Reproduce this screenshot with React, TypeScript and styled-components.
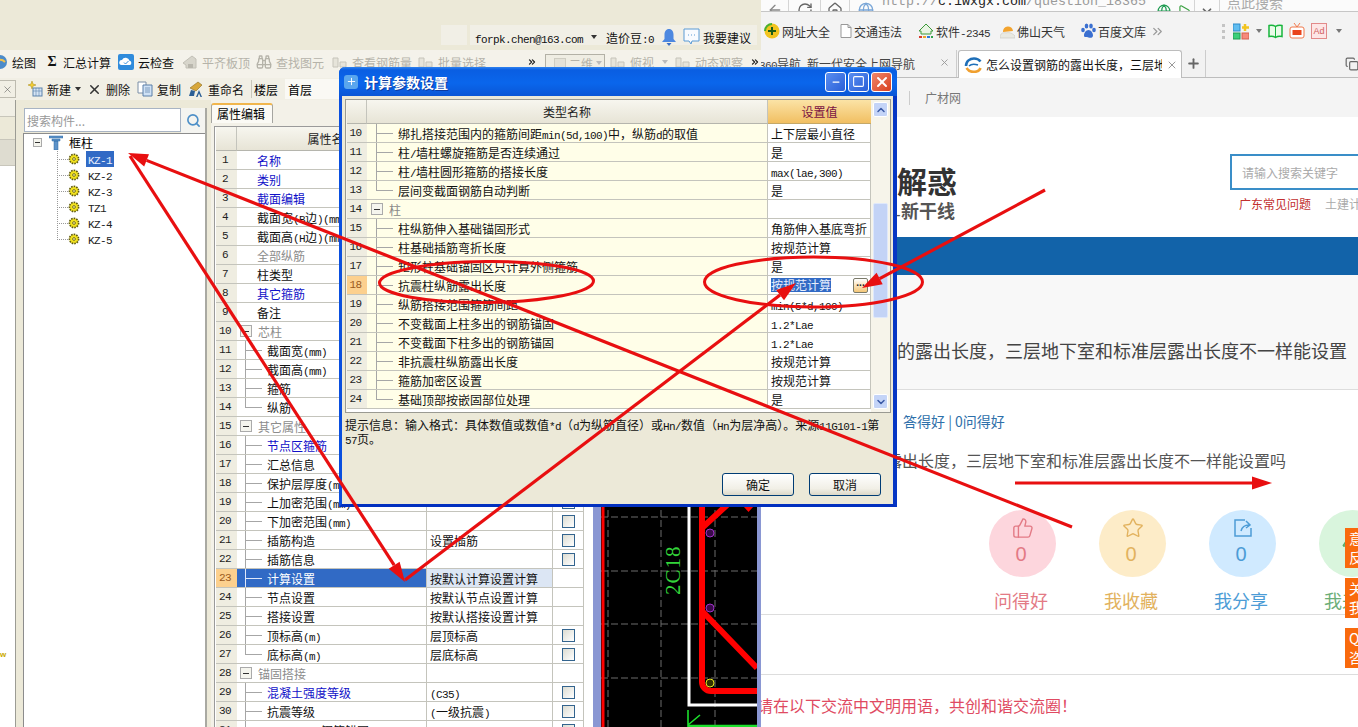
import React from "react";
import styled, { createGlobalStyle } from "styled-components";
import { ThumbsUp, Star, ChevronsRight, Binoculars, Search, X, RotateCw, House, Globe, Bell, MessageSquareMore, Plus, ArrowLeft, ChevronDown, ChevronUp, Play, Minus, Square, Copy } from "lucide-react";

const Global = createGlobalStyle`
  html, body { margin: 0; padding: 0; background: #ece9d8; }
  body { font-family: "Noto Sans CJK SC", "Liberation Sans", sans-serif; font-size: 12px; color: #000; }
  * { box-sizing: border-box; }
`;

const Desktop = styled.div`
  position: relative; width: 1358px; height: 727px; overflow: hidden; display: flex; background: #ece9d8;
`;

const Lat = styled.span`
  font-family: "Liberation Mono", monospace; font-size: 11px; letter-spacing: -0.6px; white-space: pre;
`;
const T = ({ s }: { s: string }) => (
  <>
    {s.split(/([\x20-\x7e]+)/).map((p, i) => (/^[\x20-\x7e]+$/.test(p) ? <Lat key={i}>{p}</Lat> : p))}
  </>
);

/* ---------- left application window ---------- */
const AppWindow = styled.div`
  width: 761px; height: 727px; flex: none; display: flex; flex-direction: column; overflow: hidden; background: #ece9d8;
`;
const TopStrip = styled.div`
  height: 50px; flex: none; padding: 25px 0 5px 441px; display: flex; gap: 3px;
`;
const FaintBlock = styled.div`
  width: 26px; background: #f1efe6;
`;
const Account = styled.div`
  width: 287px; background: #f1efe6; display: flex; align-items: center; padding-top: 4px; white-space: nowrap; color: #111;
`;
const AccountMail = styled.span`
  margin-left: 5px; width: 108px;
`;
const Caret = styled.span<{ $ml?: number; $c?: string }>`
  display: inline-block; width: 0; height: 0; margin-left: ${(p) => p.$ml ?? 0}px;
  border-left: 3px solid transparent; border-right: 3px solid transparent; border-top: 4px solid ${(p) => p.$c ?? "#333"};
  flex: none;
`;
const Beans = styled.span`
  margin-left: 9px; width: 51px;
`;
const Suggest = styled.span`
  margin-left: 3px;
`;
const IconGap = styled.span<{ $ml: number }>`
  margin-left: ${(p) => p.$ml}px; display: inline-flex; flex: none;
`;

const Tool1 = styled.div`
  height: 28px; flex: none; margin-left: -8px; display: flex; align-items: flex-start; padding-top: 4px; background: #f4f2ea; white-space: nowrap;
`;
const ToolItem = styled.div<{ $w: number; $off?: boolean }>`
  width: ${(p) => p.$w}px; flex: none; height: 16px; display: flex; align-items: center; gap: 4px;
  color: ${(p) => (p.$off ? "#b5b3a9" : "#111")};
`;
const ToolSigma = styled.span`
  width: 14px; text-align: center; font: bold 14px "Liberation Serif", serif; color: #111;
`;
const ViewSelect = styled.div`
  width: 60px; height: 18px; flex: none; margin-right: 5px; border: 1px solid #b3b1a6; background: #efede3; display: flex; align-items: center; gap: 3px; padding-left: 8px; color: #b5b3a9;
`;
const ViewSwatch = styled.span`
  width: 12px; height: 10px; background: #e4e2d8; border: 1px solid #cfcdc2;
`;

const Tool2 = styled.div`
  height: 22px; flex: none; display: flex; align-items: center; background: #f1efe5; white-space: nowrap;
`;
const CloseCell = styled.div`
  width: 16px; height: 18px; margin-right: 11px; flex: none; border: 1px solid #bdbbb0; border-left: 0; display: flex; align-items: center; justify-content: center; color: #555;
`;
const ToolSep = styled.span`
  width: 1px; height: 18px; background: #c9c7bb; margin-right: 2px;
`;
const FloorLabel = styled.span`
  width: 31px;
`;
const FloorBox = styled.div`
  width: 60px; height: 20px; padding-left: 3px; background: #faf9f4; display: flex; align-items: center;
`;

const Body = styled.div`
  flex: 1; display: flex; min-height: 0;
`;
const Nav = styled.div`
  width: 16px; flex: none; margin-right: 7px; border-right: 1px solid #9c9c94; display: flex; flex-direction: column;
`;
const NavRow = styled.div<{ $h: number; $bg: string }>`
  height: ${(p) => p.$h}px; flex: none; background: ${(p) => p.$bg}; border-bottom: 1px solid #c8c6bb;
`;
const NavRest = styled.div`
  flex: 1; background: #fff; padding-top: 484px; font: bold 8px "Liberation Sans", sans-serif; color: #c8a900;
`;
const TreePanel = styled.div`
  width: 184px; flex: none; margin-top: 8px; border-right: 2px solid #a9a9a2; display: flex; flex-direction: column; background: #fff;
`;
const SearchRow = styled.div`
  height: 25px; flex: none; display: flex; padding-left: 1px; background: #ece9d8;
`;
const SearchInput = styled.div`
  width: 157px; height: 24px; border: 1px solid #a8b4c4; background: #fff; color: #999; display: flex; align-items: center; padding-left: 2px; font-size: 12px;
`;
const SearchBtn = styled.div`
  flex: 1; display: flex; align-items: center; justify-content: center; background: #f4f4f0; color: #4d8fc7;
`;
const TreeBox = styled.div`
  flex: 1; border-left: 1px solid #8c8c8c; border-top: 1px solid #8c8c8c; padding-left: 9px;
`;
const TreeRoot = styled.div`
  height: 17px; display: flex; align-items: center;
`;
const MinusBox = styled.span<{ $size?: number }>`
  width: ${(p) => p.$size ?? 9}px; height: ${(p) => p.$size ?? 9}px; flex: none; border: 1px solid #aaa; background: #f5f5ee; display: flex; align-items: center; justify-content: center;
  &::after { content: ""; width: 60%; height: 1px; background: #333; }
`;
const FunnelSlot = styled.span`
  margin: 0 6px 0 7px; display: inline-flex;
`;
const TreeItem = styled.div`
  height: 16px; display: flex; align-items: center; padding-left: 24px;
`;
const TreeDots = styled.span<{ $last?: boolean }>`
  width: 11px; height: 16px; flex: none;
  background-image: repeating-linear-gradient(to right, #999 0 1px, transparent 1px 2px), repeating-linear-gradient(to bottom, #999 0 1px, transparent 1px 2px);
  background-size: 100% 1px, 1px ${(p) => (p.$last ? "8px" : "100%")};
  background-position: 0 8px, 0 0;
  background-repeat: no-repeat;
`;
const GearSlot = styled.span`
  display: inline-flex; margin-right: 6px;
`;
const TreeName = styled.span<{ $sel?: boolean }>`
  height: 16px; padding: 0 2px; line-height: 16px; background: ${(p) => (p.$sel ? "#316ac5" : "transparent")}; color: ${(p) => (p.$sel ? "#e8eefc" : "#222")};
`;

const Props = styled.div`
  width: 382px; flex: none; margin-left: 4px; padding-top: 3px; background: #f3f1e8; display: flex; flex-direction: column; overflow: hidden;
`;
const PropTab = styled.div`
  width: 62px; height: 20px; flex: none; background: #fbfaf5; border: 1px solid #a5a5a0; border-top: 2px solid #f1b64d; border-bottom: 0; border-radius: 3px 3px 0 0; padding-left: 5px; line-height: 17px;
`;
const PropTable = styled.div`
  margin: 3px 0 0 3px; width: 379px; flex: 1; border-top: 1px solid #9a9a9a; border-left: 1px solid #9a9a9a; padding-left: 1px; background: #fff;
`;
const PropRow = styled.div<{ $head?: boolean }>`
  display: grid; grid-template-columns: 21px 190px 126px 31px; height: ${(p) => (p.$head ? 24 : 19)}px;
`;
const Num = styled.div<{ $on?: boolean }>`
  display: flex; align-items: center; justify-content: center; padding-right: 3px; background: ${(p) => (p.$on ? "#fcd08e" : "#efede1")}; color: ${(p) => (p.$on ? "#9a5a20" : "#222")}; border-bottom: 1px solid #c4c4bc;
`;
const HeadCell = styled.div`
  display: flex; align-items: center; justify-content: center; background: linear-gradient(#f7f6ef, #e7e4d6); border-right: 1px solid #c4c4bc; border-bottom: 1px solid #b5b5ad; color: #222;
`;
const NameCell = styled.div<{ $sel?: boolean; $color?: string; $pad: number }>`
  display: flex; align-items: center; padding-left: ${(p) => p.$pad}px; white-space: nowrap; overflow: hidden;
  background: ${(p) => (p.$sel ? "#316ac5" : "#fff")}; color: ${(p) => (p.$sel ? "#fff" : p.$color ?? "#111")};
  border-right: 1px solid #c4c4bc; border-bottom: 1px solid #c4c4bc;
`;
const Branch = styled.span<{ $last?: boolean; $sel?: boolean }>`
  width: 17px; height: 18px; flex: none; margin-right: 5px;
  background-image: linear-gradient(${(p) => (p.$sel ? "#dfe8fa" : "#a6a6a6")}, ${(p) => (p.$sel ? "#dfe8fa" : "#a6a6a6")}), linear-gradient(${(p) => (p.$sel ? "#dfe8fa" : "#a6a6a6")}, ${(p) => (p.$sel ? "#dfe8fa" : "#a6a6a6")});
  background-size: 1px ${(p) => (p.$last ? "10px" : "100%")}, 100% 1px;
  background-position: 0 0, 0 9px;
  background-repeat: no-repeat;
`;
const GroupBox = styled(MinusBox)`
  margin-right: 6px;
`;
const ValueCell = styled.div<{ $sel?: boolean }>`
  display: flex; align-items: center; padding-left: 3px; white-space: nowrap; background: ${(p) => (p.$sel ? "#dce6f4" : "#fff")}; color: #111; border-right: 1px solid #c4c4bc; border-bottom: 1px solid #c4c4bc;
`;
const CheckCell = styled.div`
  display: flex; align-items: center; justify-content: center; border-right: 1px solid #c4c4bc; border-bottom: 1px solid #c4c4bc; background: #fff;
`;
const Check = styled.span`
  width: 13px; height: 13px; border: 1px solid #33648e; background: linear-gradient(135deg, #dcdcd2, #fff);
`;
const Band = styled.div<{ $w: number }>`
  width: ${(p) => p.$w}px; flex: none; background: #8a97d3;
`;
const Canvas = styled.div`
  width: 156px; flex: none; background: #000; overflow: hidden; display: flex;
`;

/* ---------- browser window ---------- */
const Browser = styled.div`
  width: 597px; height: 727px; flex: none; background: #fff; overflow: hidden; display: flex; flex-direction: column; position: relative;
`;
const AddressBar = styled.div`
  height: 12px; flex: none; display: flex; align-items: flex-start; background: #fbfbfb; border-bottom: 1px solid #c6c6c6; overflow: hidden; color: #777;
`;
const AddrSlot = styled.div<{ $w: number; $bl?: boolean }>`
  width: ${(p) => p.$w}px; height: 11px; flex: none; display: flex; justify-content: center; align-items: flex-end; overflow: hidden; border-left: ${(p) => (p.$bl ? "1px solid #d5d5d5" : "0")};
  & > * { flex: none; margin-bottom: -7px; }
`;
const Url = styled.div`
  width: 272px; flex: none; font: 13.33px/13px "Liberation Mono", monospace; color: #9a9a9a; white-space: nowrap; margin-top: -5px; height: 16px;
`;
const UrlHost = styled.b`
  font-weight: 400; color: #222;
`;
const AddrSearch = styled.div`
  margin: -7px 0 0 7px; font-size: 14px; color: #aaa; white-space: nowrap; line-height: 18px;
`;
const Bookmarks = styled.div`
  height: 38px; flex: none; display: flex; align-items: center; padding-left: 3px; background: #f3f3f3; white-space: nowrap; color: #333;
`;
const Mark = styled.div<{ $w: number }>`
  width: ${(p) => p.$w}px; flex: none; display: flex; align-items: center; gap: 2px;
`;
const TabsBar = styled.div`
  height: 28px; flex: none; display: flex; background: #f2f2f2; border-bottom: 1px solid #bdbdbd; white-space: nowrap; color: #333; overflow: visible;
`;
const TabOff = styled.div`
  width: 198px; margin-left: -2px; flex: none; padding-top: 7px; display: flex; align-items: flex-start; border-right: 1px solid #ccc; line-height: 14px;
`;
const TabOffTitle = styled.span`
  width: 180px; color: #444;
`;
const TabOn = styled.div`
  width: 224px; height: 28px; flex: none; background: #fff; border: 1px solid #bdbdbd; border-bottom: 0; border-radius: 3px 3px 0 0; display: flex; align-items: center; padding-left: 5px; gap: 4px; margin-left: 1px;
`;
const TabTitle = styled.span`
  width: 176px; overflow: hidden; color: #111;
`;
const TabPlus = styled.div`
  width: 24px; flex: none; border-right: 1px solid #ccc; display: flex; align-items: center; justify-content: center; color: #666;
`;
const TabEnd = styled.div`
  margin-left: 139px; display: flex; align-items: center; color: #666;
`;
const SiteNav = styled.div`
  height: 39px; flex: none; background: #f4f4f4; padding-left: 148px; display: flex; align-items: center; gap: 15px; color: #777;
`;
const SiteSep = styled.span`
  width: 1px; height: 14px; background: #ccc;
`;
const Hero = styled.div`
  height: 120px; flex: none; display: flex; background: #fff;
`;
const Logo = styled.div`
  width: 196px; flex: none; padding-top: 45px; text-align: right; overflow: hidden; white-space: nowrap;
`;
const LogoMain = styled.div`
  font-size: 30px; line-height: 36px; font-weight: 700; color: #333;
`;
const LogoSub = styled.div`
  font-size: 18px; line-height: 20px; margin: 2px 2px 0 0; font-weight: 700; color: #555;
`;
const HeroSearch = styled.div`
  margin-left: 273px; padding-top: 37px; flex: none; width: 200px;
`;
const HeroInput = styled.div`
  height: 36px; border: 2px solid #3a8ec8; padding-left: 10px; display: flex; align-items: center; color: #aaa;
`;
const HeroLinks = styled.div`
  margin: 6px 0 0 9px; line-height: 16px; display: flex; gap: 14px; white-space: nowrap; color: #aaa;
`;
const HotLink = styled.span`
  color: #c22f2f;
`;
const BlueBar = styled.div`
  height: 38px; flex: none; background: #1263a9;
`;
const TitleStrip = styled.div`
  height: 115px; flex: none; padding: 64px 0 0 28px; background: #f8f8f8; border-bottom: 1px solid #ddd; font-size: 18px; line-height: 22px; color: #444; white-space: nowrap;
`;
const Stats = styled.div`
  margin: 21px 0 0 142px; height: 20px; font-size: 14px; line-height: 20px; color: #2e70aa; white-space: pre;
`;
const Question = styled.div`
  margin: 17px 0 0 13px; height: 24px; font-size: 16px; line-height: 24px; color: #555; white-space: nowrap;
`;
const Actions = styled.div`
  margin-top: 38px; padding: 0 0 2px 228px; display: flex; gap: 43px; border-bottom: 1px solid #ddd;
`;
const Action = styled.div<{ $c: string }>`
  width: 67px; flex: none; display: flex; flex-direction: column; align-items: center; color: ${(p) => p.$c};
`;
const Circle = styled.div<{ $bg: string }>`
  width: 67px; height: 67px; border-radius: 50%; background: ${(p) => p.$bg}; display: flex; flex-direction: column; align-items: center; gap: 4px; padding-top: 7px;
`;
const Zero = styled.span`
  font: 20px/22px "Liberation Sans", sans-serif; margin-right: 3px;
`;
const ActionName = styled.div`
  margin: 11px 3px 0 0; height: 24px; font-size: 18px; line-height: 24px; white-space: nowrap;
`;
const Spacer = styled.div`
  height: 60px; flex: none; border-bottom: 1px solid #ddd;
`;
const Notice = styled.div`
  margin: 20px 0 0 -4px; font-size: 16px; line-height: 20px; color: #e04a62; white-space: nowrap;
`;
const SideTags = styled.div`
  position: absolute; left: 584px; top: 528px; display: flex; flex-direction: column; gap: 10px;
`;
const SideTag = styled.div`
  width: 40px; height: 40px; background: #f96a0d; color: #fff; font-size: 14px; line-height: 19px; padding: 1px 0 0 4px; white-space: nowrap;
`;

/* ---------- dialog ---------- */
const Dialog = styled.div`
  position: absolute; left: 339px; top: 67px; width: 558px; height: 440px; background: #ece9d8;
  border-left: 3px solid #0a4fdf; border-right: 4px solid #0636c4; border-bottom: 3px solid #0230bf; border-radius: 6px 6px 0 0; display: flex; flex-direction: column;
`;
const TitleBar = styled.div`
  height: 29px; flex: none; margin: 0 -4px 0 -3px; padding: 0 5px; display: flex; align-items: center; gap: 6px; border-radius: 6px 6px 0 0;
  background: linear-gradient(#2f82ee 0, #0a5ee2 10%, #0a66ec 55%, #0a56d6 100%);
`;
const TitleIcon = styled.span`
  width: 14px; height: 14px; border-radius: 3px; background: #59a6ee; display: flex; align-items: center; justify-content: center; color: #fff;
`;
const TitleText = styled.span`
  font-size: 14px; font-weight: 700; color: #fff; text-shadow: 1px 1px 0 #0a3aa0; flex: 1;
`;
const WinBtn = styled.span<{ $close?: boolean }>`
  width: 21px; height: 20px; border: 1px solid #fff; border-radius: 3px; display: flex; align-items: center; justify-content: center; color: #fff;
  background: ${(p) => (p.$close ? "linear-gradient(135deg,#f0866a,#d8401f)" : "linear-gradient(135deg,#5a8ef0,#2a5fd8)")};
  & + & { margin-left: -4px; }
`;
const ParamTable = styled.div`
  margin: 3px 0 0 3px; width: 546px; height: 314px; flex: none; border: 1px solid #9a9a92; padding: 0 2px 0 1px; display: flex; gap: 2px; background: #f6f4ea;
`;
const ParamGrid = styled.div`
  width: 524px; flex: none; background: #fff;
`;
const ParamRow = styled.div<{ $head?: boolean }>`
  display: grid; grid-template-columns: 20px 401px 103px; height: ${(p) => (p.$head ? 24 : 19)}px;
`;
const ParamHeadOn = styled.div`
  display: flex; align-items: center; justify-content: center; background: linear-gradient(#fbe3a6, #f1bf62); color: #7a1242; border-bottom: 1px solid #c4a868;
`;
const ParamName = styled.div<{ $pad: number; $muted?: boolean }>`
  display: flex; align-items: center; padding-left: ${(p) => p.$pad}px; background: #fffee8; color: ${(p) => (p.$muted ? "#888" : "#111")}; white-space: nowrap; border-right: 1px solid #c4c4bc; border-bottom: 1px solid #c4c4bc;
`;
const ParamValue = styled.div`
  display: flex; align-items: center; justify-content: space-between; padding: 0 2px 0 3px; white-space: nowrap; background: #fff; color: #111; border-right: 1px solid #c4c4bc; border-bottom: 1px solid #c4c4bc;
`;
const Selected = styled.span`
  background: #316ac5; color: #e8eefc; height: 14px; line-height: 14px;
`;
const MoreBtn = styled.span`
  width: 15px; height: 15px; border: 1px solid #7a7a6a; border-radius: 2px; background: linear-gradient(#fff, #f4c778); font: bold 10px/8px "Liberation Sans", sans-serif; text-align: center; color: #222;
`;
const Scroll = styled.div`
  width: 15px; flex: none; display: flex; flex-direction: column; padding: 2px 0 3px;
`;
const ScrollBtn = styled.span`
  width: 15px; height: 15px; flex: none; border-radius: 2px; border: 1px solid #fff; background: #c4d4f7; display: flex; align-items: center; justify-content: center; color: #3a59a5;
`;
const Thumb = styled.span`
  height: 115px; flex: none; margin: 86px 0 auto; border-radius: 2px; background: #c3d3f6; border: 1px solid #dfe8fb;
`;
const Hint = styled.div`
  margin: 6px 0 0 3px; font-size: 12px; line-height: 12px; white-space: nowrap; color: #111;
`;
const DialogButtons = styled.div`
  margin-top: auto; padding: 0 12px 8px 0; display: flex; justify-content: flex-end; gap: 15px;
`;
const XpButton = styled.div`
  width: 72px; height: 23px; border: 1px solid #003c74; border-radius: 3px; background: linear-gradient(#fff, #f1efe6 70%, #dcd8c8); display: flex; align-items: center; justify-content: center; color: #111;
`;

const Overlay = styled.svg`
  position: absolute; left: 0; top: 0; pointer-events: none;
`;

/* ---------- drawn icons ---------- */
const Gear = () => (
  <svg width="12" height="12" viewBox="0 0 12 12">
    <circle cx="6" cy="6" r="4.6" fill="#f2e21e" stroke="#5f5a10" strokeWidth="1.6" strokeDasharray="1.6 1" />
    <circle cx="6" cy="6" r="1.4" fill="#f8f3a0" stroke="#5f5a10" strokeWidth=".8" />
  </svg>
);
const Funnel = () => (
  <svg width="14" height="15" viewBox="0 0 14 15">
    <path d="M0 1h14v2h-14zM3 4h8v2H3zM5 6h4v9H5z" fill="#5d93c9" stroke="#2a68a4" strokeWidth=".5" />
  </svg>
);
const CloudIcon = () => (
  <svg width="16" height="16" viewBox="0 0 16 16">
    <rect width="16" height="16" rx="2" fill="#2f8bdc" />
    <path d="M3.5 11a2.5 2.5 0 0 1 .5-5 4 4 0 0 1 7.500 .8A2.200 2.200 0 0 1 12 11z" fill="#fff" />
    <path d="M6 8.500l1.500 1.500 3-3" stroke="#2f8bdc" fill="none" />
  </svg>
);
const HouseGrey = () => (
  <svg width="16" height="16" viewBox="0 0 16 16">
    <path d="M1 9l9-7 4 3v9H4V11z" fill="#d7d5cb" stroke="#c2c0b6" />
    <path d="M6 10h5v4H6z" fill="#b9b7ad" />
  </svg>
);
const LadderIcon = () => (
  <svg width="16" height="16" viewBox="0 0 16 16">
    <path d="M1 4h5v9H1zM8 8h6v5H8z" fill="#e6e4da" stroke="#c6c4ba" />
  </svg>
);
const BlueBall = () => (
  <svg width="16" height="16" viewBox="0 0 16 16">
    <circle cx="8" cy="8" r="7" fill="#4c8bc9" />
    <path d="M3 9c3-4 7-4 10-1" stroke="#f4c24a" strokeWidth="2" fill="none" />
  </svg>
);
const TabLogo = () => (
  <svg width="18" height="16" viewBox="0 0 18 16" fill="none" strokeWidth="2.600">
    <path d="M2 9C2 4 6 1.500 10 1.500c3 0 5 1 6.500 3" stroke="#1f6fb8" />
    <path d="M5 9c2-2 6-2 9-1" stroke="#1f6fb8" strokeWidth="1.600" />
    <path d="M2.500 11c2 3 6 4.500 10 3.500 2-.5 3.500-2 4-3.500" stroke="#f0a030" />
  </svg>
);
const NewIcon = () => (
  <svg width="16" height="16" viewBox="0 0 16 16">
    <path d="M5 0l1 3 3 1-3 1-1 3-1-3-3-1 3-1z" fill="#f3cd33" stroke="#a88a10" strokeWidth=".5" />
    <rect x="6" y="7" width="9" height="8" fill="#d6e4f4" stroke="#5c83ac" />
    <path d="M6 10h9M9 7v8M12 7v8" stroke="#5c83ac" strokeWidth=".6" />
  </svg>
);
const CopyIcon = () => (
  <svg width="16" height="16" viewBox="0 0 16 16">
    <path d="M1 1h8v11H1z" fill="#fff" stroke="#7a8ea6" />
    <path d="M6 4h9v11H6z" fill="#cfe1f5" stroke="#5a7fa8" />
    <path d="M8 7h5M8 9h5M8 11h5" stroke="#5a7fa8" strokeWidth=".7" />
  </svg>
);
const RenameIcon = () => (
  <svg width="16" height="17" viewBox="0 0 16 17">
    <path d="M2 7l8-6 4 3-6 6z" fill="#d8a73a" stroke="#8a6a20" strokeWidth=".6" />
    <path d="M1 15l2-6 4 1-1 5zM8 16l3-7 3 7h-1.500l-1.500-3.500L9.500 16z" fill="#2c5f96" />
  </svg>
);
const BellIcon = () => (
  <svg width="14" height="17" viewBox="0 0 14 17">
    <path d="M7 0c3 0 4.500 2.500 4.500 5.500V10L14 13H0l2.500-3V5.500C2.500 2.500 4 0 7 0z" fill="#4d88e0" />
    <path d="M4.500 14h5L7 17z" fill="#3a6fc4" />
  </svg>
);
const ChatIcon = () => (
  <svg width="17" height="18" viewBox="0 0 17 18">
    <path d="M1 1h15v12h-7l-1 3-2-3H1z" fill="#f8fbff" stroke="#5b9bd5" />
    <path d="M5 7h1M8 7h1M11 7h1" stroke="#5b9bd5" />
  </svg>
);
const PlusBall = () => (
  <svg width="16" height="16" viewBox="0 0 16 16">
    <circle cx="8" cy="8" r="7.500" fill="#f2c41f" />
    <path d="M1 8a7 7 0 0 1 7-7" stroke="#4cb02e" strokeWidth="2" fill="none" />
    <path d="M8 4v8M4 8h8" stroke="#1c5c18" strokeWidth="2" />
  </svg>
);
const PageIcon = () => (
  <svg width="12" height="14" viewBox="0 0 12 14">
    <path d="M1 .5h7l3 3v10H1z" fill="#fff" stroke="#999" />
    <path d="M8 .5v3h3" fill="none" stroke="#999" />
  </svg>
);
const SoftIcon = () => (
  <svg width="16" height="16" viewBox="0 0 16 16">
    <path d="M8 1L1 8h2v3h10V8h2z" fill="#e9f4e4" stroke="#3d9a3a" />
    <path d="M1 13h3v2H1z" fill="#d83a2c" />
    <path d="M5 13h3v2H5z" fill="#e9a42a" />
    <path d="M9 13h3v2H9z" fill="#2c7ad8" />
    <path d="M13 13h2v2h-2z" fill="#2ca24a" />
  </svg>
);
const WeatherIcon = () => (
  <svg width="15" height="16" viewBox="0 0 15 16">
    <path d="M3 9a5 5 0 0 1 10-1z" fill="#f3a32d" />
    <path d="M0 15v-2c1-3 4-4 6-3 3-1 6 0 9 3v2z" fill="#e9e9e2" stroke="#c8c8c0" strokeWidth=".6" />
  </svg>
);
const PawIcon = () => (
  <svg width="15" height="16" viewBox="0 0 15 16" fill="#3a6fd0">
    <ellipse cx="2" cy="7" rx="1.800" ry="2.300" />
    <ellipse cx="5.500" cy="3" rx="1.800" ry="2.500" />
    <ellipse cx="10" cy="3" rx="1.800" ry="2.500" />
    <ellipse cx="13" cy="7" rx="1.800" ry="2.300" />
    <path d="M7.500 7c2.500 0 4.500 3 4.500 5.500S9.500 15 7.500 14.500 3 15 3 12.500 5 7 7.500 7z" />
  </svg>
);
const GridIcon = () => (
  <svg width="16" height="17" viewBox="0 0 16 17">
    <rect x="0" y="1" width="7" height="7" fill="#61bdf0" stroke="#2f8bc9" />
    <rect x="0" y="10" width="7" height="6" fill="#3ccf7a" stroke="#1f9c52" />
    <rect x="9" y="10" width="7" height="6" fill="#f78a7a" stroke="#d4604f" />
    <path d="M12 1v7M9 4.500h7" stroke="#f2c41f" strokeWidth="2.500" />
  </svg>
);
const BookIcon = () => (
  <svg width="15" height="15" viewBox="0 0 15 15">
    <path d="M1 1.500c2.500-.5 5 0 6.500 1 1.500-1 4-1.500 6.500-1v11c-2.500-.5-5 0-6.500 1-1.500-1-4-1.500-6.500-1z" fill="#eafbe9" stroke="#17b53c" strokeWidth="1.500" />
    <path d="M7.500 2.500v11" stroke="#17b53c" />
  </svg>
);
const TvIcon = () => (
  <svg width="16" height="16" viewBox="0 0 16 16">
    <rect x="1" y="4" width="14" height="11" rx="2" fill="#fff" stroke="#f0784c" />
    <path d="M5 0l3 4 3-4" stroke="#f0784c" fill="none" />
    <rect x="3.500" y="7" width="9" height="5" fill="#e9441c" />
  </svg>
);
const ShareIcon = () => (
  <svg width="22" height="22" viewBox="0 0 22 22" fill="none" stroke="#4c9cd6" strokeWidth="1.500">
    <path d="M13 3H3v16h16V11" />
    <path d="M9 14c1-4 4-6 8-6M14 4l4 4-4 3" />
  </svg>
);
const EditIcon = () => (
  <svg width="22" height="34" viewBox="0 0 22 34" fill="none" stroke="#58a868" strokeWidth="1.500">
    <path d="M1 29l6-9M1 29h6" />
  </svg>
);
const AdBox = styled.span`
  width: 16px; height: 16px; border: 1px solid #e28a8a; background: #fde6e6; color: #d06060; font: 9px/14px "Liberation Sans", sans-serif; text-align: center; flex: none;
`;
const DotsBar = styled.span`
  width: 3px; height: 15px; flex: none; margin: 0 8px 0 57px; background: repeating-linear-gradient(#c4c4c4 0 3px, transparent 3px 6px);
`;
const Slot = styled.span<{ $ml: number }>`
  margin-left: ${(p) => p.$ml}px; display: inline-flex; flex: none;
`;

/* ---------- data ---------- */
type P = { label: string; c?: string; kind?: "g" | "b" | "l"; value?: string; check?: boolean; sel?: boolean };
const BLUE = "#1010c8";
const GREY = "#8c8c8c";
const propRows: P[] = [
  { label: "名称", c: BLUE }, { label: "类别", c: BLUE }, { label: "截面编辑", c: BLUE },
  { label: "截面宽(B边)(mm)" }, { label: "截面高(H边)(mm)" }, { label: "全部纵筋", c: GREY },
  { label: "柱类型" }, { label: "其它箍筋", c: BLUE }, { label: "备注" },
  { label: "芯柱", c: GREY, kind: "g" },
  { label: "截面宽(mm)", kind: "b" }, { label: "截面高(mm)", kind: "b" }, { label: "箍筋", kind: "b" }, { label: "纵筋", kind: "l" },
  { label: "其它属性", c: GREY, kind: "g" },
  { label: "节点区箍筋", c: BLUE, kind: "b" }, { label: "汇总信息", kind: "b" },
  { label: "保护层厚度(mm)", kind: "b" }, { label: "上加密范围(mm)", kind: "b", check: true }, { label: "下加密范围(mm)", kind: "b", check: true },
  { label: "插筋构造", kind: "b", value: "设置插筋", check: true }, { label: "插筋信息", kind: "b", check: true },
  { label: "计算设置", kind: "b", value: "按默认计算设置计算", sel: true },
  { label: "节点设置", kind: "b", value: "按默认节点设置计算" }, { label: "搭接设置", kind: "b", value: "按默认搭接设置计算" },
  { label: "顶标高(m)", kind: "b", value: "层顶标高", check: true }, { label: "底标高(m)", kind: "l", value: "层底标高", check: true },
  { label: "锚固搭接", c: GREY, kind: "g" },
  { label: "混凝土强度等级", c: BLUE, kind: "b", value: "(C35)", check: true },
  { label: "抗震等级", kind: "b", value: "(一级抗震)", check: true },
  { label: "HPB235(A)钢筋锚固", kind: "b", value: "(35)", check: true },
];

type Q = { n: number; label: string; value?: string; kind: "b" | "l" | "g" };
const paramRows: Q[] = [
  { n: 10, label: "绑扎搭接范围内的箍筋间距min(5d,100)中，纵筋d的取值", value: "上下层最小直径", kind: "b" },
  { n: 11, label: "柱/墙柱螺旋箍筋是否连续通过", value: "是", kind: "b" },
  { n: 12, label: "柱/墙柱圆形箍筋的搭接长度", value: "max(lae,300)", kind: "b" },
  { n: 13, label: "层间变截面钢筋自动判断", value: "是", kind: "l" },
  { n: 14, label: "柱", kind: "g" },
  { n: 15, label: "柱纵筋伸入基础锚固形式", value: "角筋伸入基底弯折", kind: "b" },
  { n: 16, label: "柱基础插筋弯折长度", value: "按规范计算", kind: "b" },
  { n: 17, label: "矩形柱基础锚固区只计算外侧箍筋", value: "是", kind: "b" },
  { n: 18, label: "抗震柱纵筋露出长度", value: "按规范计算", kind: "b" },
  { n: 19, label: "纵筋搭接范围箍筋间距", value: "min(5*d,100)", kind: "b" },
  { n: 20, label: "不变截面上柱多出的钢筋锚固", value: "1.2*Lae", kind: "b" },
  { n: 21, label: "不变截面下柱多出的钢筋锚固", value: "1.2*Lae", kind: "b" },
  { n: 22, label: "非抗震柱纵筋露出长度", value: "按规范计算", kind: "b" },
  { n: 23, label: "箍筋加密区设置", value: "按规范计算", kind: "b" },
  { n: 24, label: "基础顶部按嵌固部位处理", value: "是", kind: "l" },
];

const Arrow = ({ x1, y1, x2, y2 }: { x1: number; y1: number; x2: number; y2: number }) => {
  const a = Math.atan2(y2 - y1, x2 - x1);
  const L = 20, W = 6.5;
  const bx = x2 - L * Math.cos(a), by = y2 - L * Math.sin(a);
  const px = W * Math.sin(a), py = W * Math.cos(a);
  return (
    <g>
      <line x1={x1} y1={y1} x2={bx} y2={by} stroke="#e80f10" strokeWidth="3.2" />
      <polygon points={`${x2},${y2} ${bx + px},${by - py} ${bx - px},${by + py}`} fill="#e80f10" />
    </g>
  );
};

const tool1 = [
  { w: 53, icon: <BlueBall />, label: "绘图" },
  { w: 73, icon: <ToolSigma>Σ</ToolSigma>, label: "汇总计算" },
  { w: 64, icon: <CloudIcon />, label: "云检查" },
  { w: 74, icon: <HouseGrey />, label: "平齐板顶", off: true },
  { w: 76, icon: <Binoculars size={16} />, label: "查找图元", off: true },
  { w: 86, icon: <LadderIcon />, label: "查看钢筋量", off: true },
  { w: 109, icon: <LadderIcon />, label: "批量选择", off: true },
];

export default function App() {
  return (
    <>
      <Global />
      <Desktop>
        <AppWindow>
          <TopStrip>
            <FaintBlock />
            <Account>
              <AccountMail><T s="forpk.chen@163.com" /></AccountMail>
              <Caret $ml={8} />
              <Beans>造价豆<T s=":0" /></Beans>
              <IconGap $ml={5}><BellIcon /></IconGap>
              <IconGap $ml={7}><ChatIcon /></IconGap>
              <Suggest>我要建议</Suggest>
            </Account>
          </TopStrip>
          <Tool1>
            {tool1.map((t) => (
              <ToolItem key={t.label} $w={t.w} $off={t.off}>
                {t.icon}
                <span>{t.label}</span>
              </ToolItem>
            ))}
            <ToolItem $w={18}><ChevronsRight size={10} strokeWidth={3} color="#222" /></ToolItem>
            <ViewSelect><ViewSwatch /><span>二维</span><Caret $c="#bbb" /></ViewSelect>
            <ToolItem $w={65} $off><LadderIcon /><span>俯视</span><Caret $ml={4} $c="#bbb" /></ToolItem>
            <ToolItem $w={75} $off><LadderIcon /><span>动态观察</span></ToolItem>
            <ToolItem $w={12}><ChevronsRight size={10} strokeWidth={3} color="#222" /></ToolItem>
          </Tool1>
          <Tool2>
            <CloseCell><X size={11} strokeWidth={1.2} /></CloseCell>
            <ToolItem $w={60}><NewIcon /><span>新建</span><Caret /></ToolItem>
            <ToolItem $w={50}><X size={15} strokeWidth={2.4} color="#333" /><span>删除</span></ToolItem>
            <ToolItem $w={51}><CopyIcon /><span>复制</span></ToolItem>
            <ToolItem $w={63}><RenameIcon /><span>重命名</span></ToolItem>
            <ToolSep />
            <FloorLabel>楼层</FloorLabel>
            <FloorBox>首层</FloorBox>
          </Tool2>
          <Body>
            <Nav>
              <NavRow $h={17} $bg="#f1efe5" />
              <NavRow $h={23} $bg="#ece9d8" />
              <NavRow $h={26} $bg="#dedcd0" />
              <NavRest>w</NavRest>
            </Nav>
            <TreePanel>
              <SearchRow>
                <SearchInput>搜索构件...</SearchInput>
                <SearchBtn><Search size={15} strokeWidth={2.6} /></SearchBtn>
              </SearchRow>
              <TreeBox>
                <TreeRoot>
                  <MinusBox />
                  <FunnelSlot><Funnel /></FunnelSlot>
                  <span>框柱</span>
                </TreeRoot>
                {["KZ-1", "KZ-2", "KZ-3", "TZ1", "KZ-4", "KZ-5"].map((k, i) => (
                  <TreeItem key={k}>
                    <TreeDots $last={i === 5} />
                    <GearSlot><Gear /></GearSlot>
                    <TreeName $sel={i === 0}><T s={k} /></TreeName>
                  </TreeItem>
                ))}
              </TreeBox>
            </TreePanel>
            <Props>
              <PropTab>属性编辑</PropTab>
              <PropTable>
                <PropRow $head>
                  <HeadCell />
                  <HeadCell>属性名称</HeadCell>
                  <HeadCell>属性值</HeadCell>
                  <HeadCell>附加</HeadCell>
                </PropRow>
                {propRows.map((r, i) => (
                  <PropRow key={i}>
                    <Num $on={r.sel}><T s={String(i + 1)} /></Num>
                    <NameCell $sel={r.sel} $color={r.c} $pad={r.kind === "b" || r.kind === "l" ? 8 : r.kind === "g" ? 3 : 20}>
                      {r.kind === "g" && <GroupBox $size={12} />}
                      {(r.kind === "b" || r.kind === "l") && <Branch $last={r.kind === "l"} $sel={r.sel} />}
                      <span><T s={r.label} /></span>
                    </NameCell>
                    <ValueCell $sel={r.sel}>{r.value && <span><T s={r.value} /></span>}</ValueCell>
                    <CheckCell>{r.check && <Check />}</CheckCell>
                  </PropRow>
                ))}
              </PropTable>
            </Props>
            <Band $w={8} />
            <Canvas>
              <svg width="156" height="627" viewBox="601 100 156 627">
                <g stroke="#6c6c6c" strokeWidth="1" strokeDasharray="7 3">
                  <path d="M608 100V727M661 100V727M715 100V727" />
                  <path d="M601 517H757M601 571H757M601 624H757M601 678H757" />
                </g>
                <path d="M603 100V727" stroke="#f00" strokeWidth="3" />
                <path d="M689 507V705H757" stroke="#fff" strokeWidth="3" fill="none" />
                <path d="M702 507V682a9 9 0 0 0 9 9H757" stroke="#f00" strokeWidth="6" fill="none" />
                <path d="M703 527L727 505M703 612L757 668" stroke="#f00" strokeWidth="6" fill="none" />
                <path d="M744 507h9l-4.500 5z" fill="#f00" />
                <circle cx="710" cy="533" r="4" fill="#3a0a4a" stroke="#a030c8" />
                <circle cx="710" cy="608" r="4" fill="#3a0a4a" stroke="#a030c8" />
                <circle cx="710" cy="683" r="4" fill="#333300" stroke="#e8e820" />
                <path d="M688 710V727M688 725L700 715" stroke="#1ce02c" strokeWidth="1.600" fill="none" />
                <path d="M688 726H757" stroke="#1ce02c" strokeWidth="2.500" />
                <text transform="translate(680 595) rotate(-90)" fontFamily="Liberation Serif, serif" fontSize="21" fill="#33d43a" letterSpacing="1">2C18</text>
              </svg>
            </Canvas>
            <Band $w={4} />
          </Body>
        </AppWindow>

        <Browser>
          <AddressBar>
            <AddrSlot $w={27}><ArrowLeft size={16} color="#888" /></AddrSlot>
            <AddrSlot $w={32} $bl><RotateCw size={16} color="#666" /></AddrSlot>
            <AddrSlot $w={29} $bl><House size={16} color="#666" /></AddrSlot>
            <AddrSlot $w={33} $bl><Globe size={16} color="#7aa7d8" /></AddrSlot>
            <Url>http://<UrlHost>c.1wxgx.com</UrlHost>/question_18365</Url>
            <AddrSlot $w={20}><Globe size={14} color="#1f9c52" /></AddrSlot>
            <AddrSlot $w={20}><Play size={14} color="#3aa040" /></AddrSlot>
            <AddrSlot $w={25} $bl><ChevronDown size={14} color="#666" strokeWidth={3} /></AddrSlot>
            <AddrSlot $w={1} $bl />
            <AddrSearch>点此搜索</AddrSearch>
          </AddressBar>
          <Bookmarks>
            <Mark $w={76}><PlusBall /><span>网址大全</span></Mark>
            <Mark $w={78}><PageIcon /><span>交通违法</span></Mark>
            <Mark $w={82}><SoftIcon /><span><T s="软件-2345" /></span></Mark>
            <Mark $w={81}><WeatherIcon /><span>佛山天气</span></Mark>
            <Mark $w={69}><PawIcon /><span>百度文库</span></Mark>
            <ChevronsRight size={15} color="#999" />
            <DotsBar />
            <GridIcon />
            <Caret $ml={7} $c="#777" />
            <Slot $ml={6}><BookIcon /></Slot>
            <Slot $ml={6}><TvIcon /></Slot>
            <Slot $ml={6}><AdBox>Ad</AdBox></Slot>
            <Caret $ml={9} $c="#777" />
          </Bookmarks>
          <TabsBar>
            <TabOff>
              <TabOffTitle><T s="360" />导航<T s="_" />新一代安全上网导航</TabOffTitle>
              <X size={11} color="#999" />
            </TabOff>
            <TabOn>
              <TabLogo />
              <TabTitle>怎么设置钢筋的露出长度，三层地下室</TabTitle>
              <X size={12} color="#999" />
            </TabOn>
            <TabPlus><Plus size={15} strokeWidth={3} /></TabPlus>
            <TabEnd><Copy size={14} /></TabEnd>
          </TabsBar>
          <SiteNav><SiteSep /><span>广材网</span></SiteNav>
          <Hero>
            <Logo>
              <LogoMain>答疑解惑</LogoMain>
              <LogoSub>造价<Lat>-</Lat>新干线</LogoSub>
            </Logo>
            <HeroSearch>
              <HeroInput>请输入搜索关键字</HeroInput>
              <HeroLinks><HotLink>广东常见问题</HotLink><span>土建计算</span></HeroLinks>
            </HeroSearch>
          </Hero>
          <BlueBar />
          <TitleStrip>怎么设置钢筋的露出长度，三层地下室和标准层露出长度不一样能设置</TitleStrip>
          <Stats>答得好 | 0问得好</Stats>
          <Question>怎么设置钢筋的露出长度，三层地下室和标准层露出长度不一样能设置吗</Question>
          <Actions>
            <Action $c="#e37a85">
              <Circle $bg="#fdd6dd"><ThumbsUp size={22} strokeWidth={1.5} /><Zero>0</Zero></Circle>
              <ActionName>问得好</ActionName>
            </Action>
            <Action $c="#e2b25e">
              <Circle $bg="#fdecc8"><Star size={22} strokeWidth={1.5} /><Zero>0</Zero></Circle>
              <ActionName>我收藏</ActionName>
            </Action>
            <Action $c="#4c9cd6">
              <Circle $bg="#d0eaff"><ShareIcon /><Zero>0</Zero></Circle>
              <ActionName>我分享</ActionName>
            </Action>
            <Action $c="#6cae78">
              <Circle $bg="#d9f5dd"><EditIcon /></Circle>
              <ActionName>我来答</ActionName>
            </Action>
          </Actions>
          <Spacer />
          <Notice>请在以下交流中文明用语，共创和谐交流圈！</Notice>
          <SideTags>
            <SideTag>意见<br />反馈</SideTag>
            <SideTag>关注<br />我们</SideTag>
            <SideTag>QQ<br />咨询</SideTag>
          </SideTags>
        </Browser>

        <Dialog>
          <TitleBar>
            <TitleIcon><Plus size={11} strokeWidth={2} /></TitleIcon>
            <TitleText>计算参数设置</TitleText>
            <WinBtn><Minus size={10} strokeWidth={3} /></WinBtn>
            <WinBtn><Square size={13} strokeWidth={2} /></WinBtn>
            <WinBtn $close><X size={16} strokeWidth={3} /></WinBtn>
          </TitleBar>
          <ParamTable>
            <ParamGrid>
              <ParamRow $head>
                <HeadCell />
                <HeadCell>类型名称</HeadCell>
                <ParamHeadOn>设置值</ParamHeadOn>
              </ParamRow>
              {paramRows.map((r) => (
                <ParamRow key={r.n}>
                  <Num $on={r.n === 18}><T s={String(r.n)} /></Num>
                  <ParamName $pad={r.kind === "g" ? 4 : 9} $muted={r.kind === "g"}>
                    {r.kind === "g" ? <GroupBox $size={12} /> : <Branch $last={r.kind === "l"} />}
                    <span><T s={r.label} /></span>
                  </ParamName>
                  <ParamValue>
                    {r.n === 18 ? (
                      <>
                        <Selected>{r.value}</Selected>
                        <MoreBtn>...</MoreBtn>
                      </>
                    ) : (
                      <span><T s={r.value ?? ""} /></span>
                    )}
                  </ParamValue>
                </ParamRow>
              ))}
            </ParamGrid>
            <Scroll>
              <ScrollBtn><ChevronUp size={12} strokeWidth={3} /></ScrollBtn>
              <Thumb />
              <ScrollBtn><ChevronDown size={12} strokeWidth={3} /></ScrollBtn>
            </Scroll>
          </ParamTable>
          <Hint>
            <T s="提示信息：输入格式：具体数值或数值*d（d为纵筋直径）或Hn/数值（Hn为层净高）。来源11G101-1第" />
            <br />
            <T s="57页。" />
          </Hint>
          <DialogButtons>
            <XpButton>确定</XpButton>
            <XpButton>取消</XpButton>
          </DialogButtons>
        </Dialog>

        <Overlay width="1358" height="727" viewBox="0 0 1358 727">
          <ellipse cx="486.500" cy="282" rx="107" ry="20.500" transform="rotate(-0.5 486 282)" fill="none" stroke="#e80f10" strokeWidth="3" />
          <ellipse cx="813.500" cy="282" rx="109" ry="25" fill="none" stroke="#e80f10" strokeWidth="3" />
          <Arrow x1={1072} y1={527} x2={128} y2={153} />
          <Arrow x1={130} y1={156} x2={405} y2={582} />
          <Arrow x1={405} y1={580} x2={796} y2={283} />
          <Arrow x1={1045} y1={190} x2={862} y2={288} />
          <Arrow x1={1015} y1={483} x2={1272} y2={483} />
        </Overlay>
      </Desktop>
    </>
  );
}
